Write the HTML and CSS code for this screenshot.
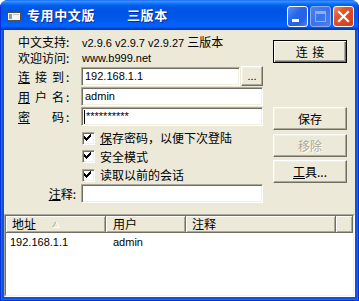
FILE: index.html
```html
<!DOCTYPE html>
<html lang="zh-CN">
<head>
<meta charset="utf-8">
<title>专用中文版 三版本</title>
<link rel="stylesheet" href="styles.css">
</head>
<body>
<div class="window">
  <div class="titlebar">
    <svg class="app-icon" width="16" height="16" viewBox="0 0 16 16" shape-rendering="crispEdges">
      <rect x="1" y="5" width="14" height="9" fill="#505050"/>
      <rect x="2" y="6" width="12" height="7" fill="#F4F4F4"/>
      <rect x="3" y="7" width="3" height="5" fill="#9A9A9A"/>
      <rect x="7" y="7" width="6" height="1" fill="#C4C4C4"/>
    </svg>
    <span class="title">专用中文版</span>
    <span class="title title-sub">三版本</span>
    <div class="controls">
      <span class="cbtn cbtn-min"><svg width="19" height="19" viewBox="0 0 19 19" shape-rendering="crispEdges"><rect x="4" y="12" width="7" height="3" fill="#fff"/></svg></span>
      <span class="cbtn cbtn-max"><svg width="19" height="19" viewBox="0 0 19 19" shape-rendering="crispEdges"><rect x="4" y="4" width="11" height="3" fill="#8EAEEE"/><rect x="4" y="4" width="1" height="11" fill="#8EAEEE"/><rect x="14" y="4" width="1" height="11" fill="#8EAEEE"/><rect x="4" y="14" width="11" height="1" fill="#8EAEEE"/></svg></span>
      <span class="cbtn cbtn-close"><svg width="19" height="19" viewBox="0 0 19 19"><path d="M5 5 L14 14 M14 5 L5 14" stroke="#fff" stroke-width="2.2" stroke-linecap="square"/></svg></span>
    </div>
  </div>
  <div class="frame">
    <div class="client">
      <div class="main">
        <div class="form">
          <div class="info"><span class="lbl">中文支持:</span><span class="val">v2.9.6 v2.9.7 v2.9.27 <span class="zh">三版本</span></span></div>
          <div class="info"><span class="lbl">欢迎访问:</span><span class="val">www.b999.net</span></div>
          <div class="field">
            <span class="lbl spaced"><u>连</u><span>接</span><span>到</span><span>:</span></span>
            <div class="edit">192.168.1.1</div>
            <div class="btn btn-browse">...</div>
          </div>
          <div class="field">
            <span class="lbl spaced"><u>用</u><span>户</span><span>名</span><span>:</span></span>
            <div class="edit">admin</div>
          </div>
          <div class="field">
            <span class="lbl spaced"><u>密</u><span></span><span>码</span><span>:</span></span>
            <div class="edit edit-pass"><span class="caret"></span>**********</div>
          </div>
          <div class="checks">
            <div class="check"><span class="cb"><svg width="11" height="11" viewBox="0 0 11 11" shape-rendering="crispEdges"><path d="M7 1h1v1h-1z M6 2h2v1h-2z M1 3h1v1h-1z M5 3h3v1h-3z M1 4h2v1h-2z M4 4h3v1h-3z M1 5h5v1h-5z M2 6h3v1h-3z M3 7h1v1h-1z" fill="#000"/></svg></span><span><u>保</u>存密码，以便下次登陆</span></div>
            <div class="check check-mid"><span class="cb"><svg width="11" height="11" viewBox="0 0 11 11" shape-rendering="crispEdges"><path d="M7 1h1v1h-1z M6 2h2v1h-2z M1 3h1v1h-1z M5 3h3v1h-3z M1 4h2v1h-2z M4 4h3v1h-3z M1 5h5v1h-5z M2 6h3v1h-3z M3 7h1v1h-1z" fill="#000"/></svg></span><span>安全模式</span></div>
            <div class="check"><span class="cb"><svg width="11" height="11" viewBox="0 0 11 11" shape-rendering="crispEdges"><path d="M7 1h1v1h-1z M6 2h2v1h-2z M1 3h1v1h-1z M5 3h3v1h-3z M1 4h2v1h-2z M4 4h3v1h-3z M1 5h5v1h-5z M2 6h3v1h-3z M3 7h1v1h-1z" fill="#000"/></svg></span><span>读取以前的会话</span></div>
          </div>
          <div class="field field-note">
            <span class="lbl lbl-right"><u>注</u>释:</span>
            <div class="edit"></div>
          </div>
        </div>
        <div class="actions">
          <div class="btn btn-default">连 接</div>
          <div class="btn btn-save">保存</div>
          <div class="btn btn-disabled">移除</div>
          <div class="btn btn-tools"><u>工</u>具...</div>
        </div>
      </div>
      <div class="listview">
        <div class="lv-inner">
          <div class="lv-head">
            <div class="hcell h1">地址<svg class="sort-arrow" width="8" height="7" viewBox="0 0 8 7"><path d="M0.5 6.5 L4 0.5" stroke="#ACA899" fill="none"/><path d="M4 0.5 L7.5 6.5 L0.5 6.5" stroke="#FFFFFF" fill="none"/></svg></div>
            <div class="hcell h2">用户</div>
            <div class="hcell h3">注释</div>
            <div class="hcell h4"></div>
          </div>
          <div class="lv-row">
            <div class="c1">192.168.1.1</div>
            <div class="c2">admin</div>
          </div>
        </div>
      </div>
    </div>
  </div>
</div>
</body>
</html>
```

FILE: styles.css
```css
* { box-sizing: border-box; }
html, body { margin: 0; padding: 0; }
body {
  width: 359px;
  height: 301px;
  overflow: hidden;
  background: #ffffff;
  font-family: "Liberation Sans", "Noto Sans CJK SC", sans-serif;
  font-size: 11px;
  color: #000;
}
u { text-decoration: underline; text-underline-offset: 1px; }
.zh, .lbl, .btn, .check, .hcell {
  font-family: "Noto Sans CJK SC", sans-serif;
  font-size: 12px;
}

.window {
  width: 359px;
  height: 301px;
  display: flex;
  flex-direction: column;
  border-radius: 8px 8px 0 0;
  overflow: hidden;
  background: #0855DD;
}

/* title bar */
.titlebar {
  flex: none;
  height: 30px;
  display: flex;
  align-items: flex-start;
  padding: 0 5px 0 6px;
  background: linear-gradient(to bottom,
    #0A5CF2 0px, #3D95FF 1px, #2E8BFE 2px, #1A7CFC 3px, #0A6EF6 4px,
    #0462EE 5px, #0058E6 7px, #0054E3 10px, #0056E8 16px, #005BF0 21px,
    #0062FA 24px, #0064FE 26px, #005AEE 27px, #004CD8 28px, #003BC4 29px);
  box-shadow: inset 1px 0 #0831D9, inset -1px 0 #0831D9;
}
.app-icon { flex: none; margin-top: 7px; display: block; }
.title {
  margin-left: 5px;
  color: #fff;
  font-family: "Noto Sans CJK SC", sans-serif;
  font-weight: 700;
  font-size: 13px;
  line-height: 30px;
  letter-spacing: 0.6px;
  white-space: nowrap;
  text-shadow: 1px 1px 0 #0B2A9A;
}
.title-sub { margin-left: 32px; }
.controls {
  margin-left: auto;
  display: flex;
  gap: 2px;
  padding-top: 6px;
}
.cbtn {
  width: 21px;
  height: 21px;
  border: 1px solid #fff;
  border-radius: 3px;
  display: flex;
  overflow: hidden;
}
.cbtn svg { display: block; }
.cbtn-min {
  background: linear-gradient(135deg, #5A92F6 0%, #2A66EA 40%, #2560E6 70%, #4A82F2 100%);
}
.cbtn-max {
  border-color: #8DACEE;
  background: linear-gradient(135deg, #4C84F0 0%, #3A72EA 50%, #4A80EE 100%);
}
.cbtn-close {
  background: linear-gradient(135deg, #F09070 0%, #E2582F 30%, #DA461E 70%, #CC4020 100%);
}

/* frame & client */
.frame {
  flex: 1;
  display: flex;
  padding: 0 4px 4px;
  background: #0855DD;
  box-shadow: inset 1px 0 #0831D9, inset -1px 0 #0831D9, inset 0 -1px #0831D9,
              inset 2px 0 #166AEE, inset -2px 0 #166AEE, inset 0 -2px #166AEE;
}
.client {
  flex: 1;
  display: flex;
  flex-direction: column;
  background: #ECE9D8;
}
.main {
  flex: none;
  height: 184px;
  display: grid;
  grid-template-columns: 245px 74px;
  column-gap: 10px;
  padding: 0 8px 0 14px;
}

/* form */
.form {
  padding-top: 4px;
  display: flex;
  flex-direction: column;
}
.info {
  display: flex;
  height: 16px;
  line-height: 16px;
  white-space: nowrap;
}
.lbl { flex: none; width: 63px; line-height: 16px; white-space: nowrap; }
.val { padding-left: 1px; font-size: 11px; }
.field {
  display: flex;
  align-items: center;
  height: 19px;
  margin-top: 1px;
}
.spaced {
  display: grid;
  grid-template-columns: 17px 17px 14px auto;
}
.lbl-right { text-align: right; padding-right: 5px; }
.edit {
  flex: 1;
  min-width: 0;
  height: 19px;
  background: #fff;
  border: 1px solid;
  border-color: #ACA899 #fff #fff #ACA899;
  box-shadow: inset 1px 1px #716F64, inset -1px -1px #F1EFE2;
  padding: 0 3px;
  line-height: 17px;
  font-size: 11px;
  white-space: nowrap;
  overflow: hidden;
}
.edit-pass { padding-left: 2px; display: flex; align-items: center; }
.caret {
  display: inline-block;
  width: 1px;
  height: 14px;
  background: #000;
  margin-right: 1px;
}

.checks {
  padding-left: 64px;
  margin-top: 3px;
  display: flex;
  flex-direction: column;
}
.check {
  display: flex;
  align-items: center;
  height: 18px;
  line-height: 16px;
  white-space: nowrap;
}
.check-mid { height: 19px; }
.cb {
  flex: none;
  width: 13px;
  height: 13px;
  margin-right: 5px;
  background: #fff;
  border: 1px solid;
  border-color: #ACA899 #fff #fff #ACA899;
  box-shadow: inset 1px 1px #716F64, inset -1px -1px #F1EFE2;
}
.cb svg { display: block; }
.field-note { margin-top: 0; }

/* buttons */
.btn {
  display: flex;
  align-items: center;
  justify-content: center;
  height: 23px;
  background: #ECE9D8;
  border: 1px solid;
  border-color: #fff #716F64 #716F64 #fff;
  box-shadow: inset -1px -1px #ACA899, inset 1px 1px #F1EFE2;
  line-height: 16px;
  white-space: nowrap;
}
.btn-browse {
  flex: none;
  width: 22px;
  height: 20px;
  margin-left: 1px;
  margin-top: -1px;
  font-family: "Liberation Sans", sans-serif;
  font-size: 11px;
}
.actions {
  display: flex;
  flex-direction: column;
  padding-top: 10px;
}
.btn-default {
  border-color: #000;
  box-shadow: inset 1px 1px #fff, inset -1px -1px #716F64, inset -2px -2px #ACA899;
  word-spacing: 2px;
}
.btn-save { margin-top: 44px; }
.btn-disabled {
  margin-top: 4px;
  color: #ACA899;
  text-shadow: 1px 1px 0 #fff;
}
.btn-tools { margin-top: 3px; }

/* list view */
.listview {
  flex: 1;
  display: flex;
  border: 1px solid;
  border-color: #ACA899 #fff #fff #ACA899;
}
.lv-inner {
  flex: 1;
  display: flex;
  flex-direction: column;
  background: #fff;
  border: 1px solid;
  border-color: #716F64 #F1EFE2 #F1EFE2 #716F64;
}
.lv-head {
  display: flex;
  height: 17px;
  background: #ECE9D8;
}
.hcell {
  flex: none;
  display: flex;
  align-items: center;
  height: 17px;
  line-height: 16px;
  padding-left: 6px;
  border-right: 1px solid #716F64;
  border-bottom: 1px solid #716F64;
  box-shadow: inset 1px 1px #fff, inset -1px -1px #ACA899;
}
.h1 { width: 100px; }
.h2 { width: 80px; padding-left: 7px; }
.h3 { width: 150px; }
.h4 { flex: 1; }
.sort-arrow { display: block; margin-left: 16px; }
.lv-row {
  display: flex;
  height: 16px;
  line-height: 16px;
  margin-top: 1px;
  font-size: 11px;
}
.c1 { width: 100px; padding-left: 4px; }
.c2 { width: 80px; padding-left: 7px; }
```
